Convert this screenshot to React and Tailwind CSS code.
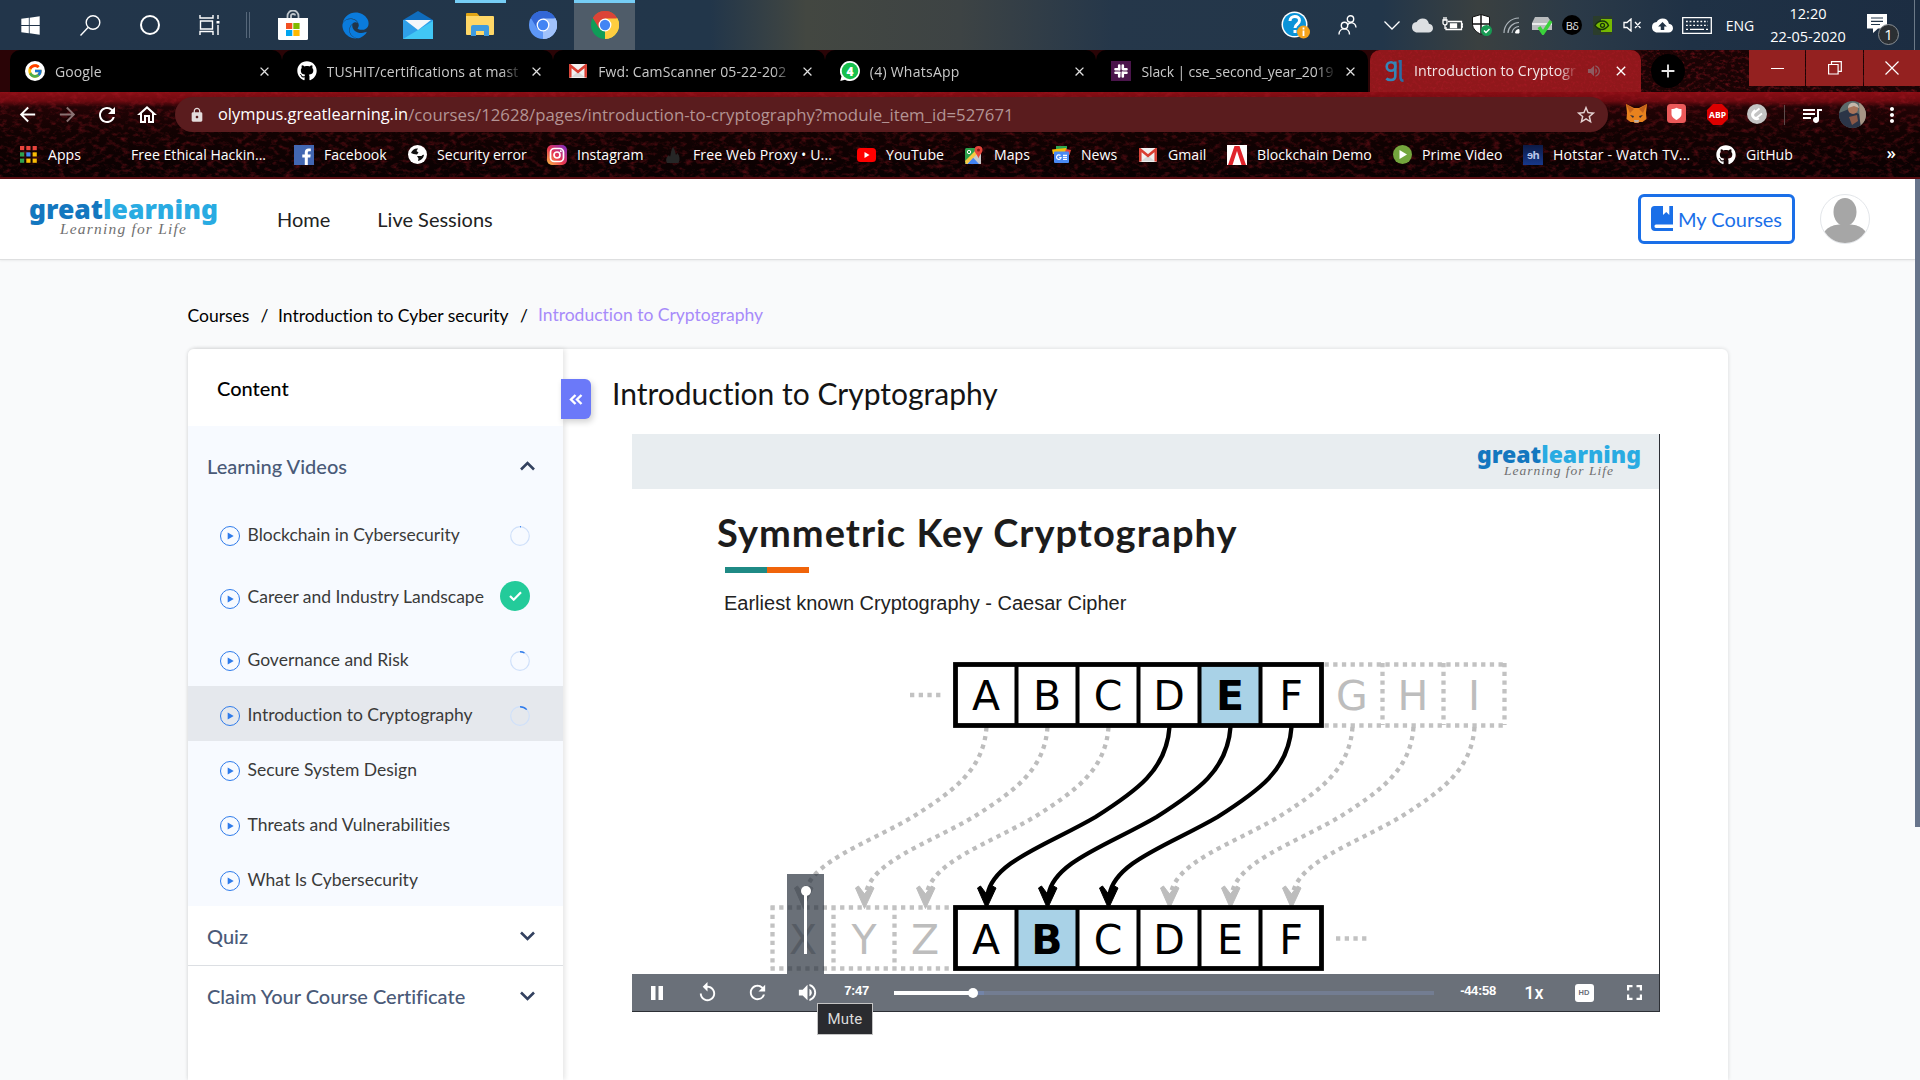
import React from "react";
import { FaGithub, FaWindows, FaEdge } from "react-icons/fa";
import { FcGoogle } from "react-icons/fc";
import {
  MdArrowBack,
  MdArrowForward,
  MdRefresh,
  MdOutlineHome,
  MdLock,
  MdStarBorder,
  MdQueueMusic,
  MdMoreVert,
  MdReplay,
  MdVolumeUp,
  MdClose,
  MdAdd,
  MdBackup,
  MdCloud,
} from "react-icons/md";

/* ---------- small drawings ---------- */

const ChromeMark = ({ a, b, c, d = "#4285f4", w = 28 }) => (
  <svg width={w} height={w} viewBox="0 0 48 48">
    <circle cx="24" cy="24" r="24" fill={b} />
    <path d="M24 24 L3.2 12 A24 24 0 0 1 44.8 12 Z" fill={a} />
    <path d="M24 24 L44.8 12 A24 24 0 0 1 24 48 Z" fill={c} />
    <path d="M24 13 H45.3 A24 24 0 0 0 3.2 12 L14 30 Z" fill={a} />
    <path d="M33.5 29.5 L24 48 A24 24 0 0 0 45.3 13 H24 Z" fill={c} />
    <circle cx="24" cy="24" r="11" fill="#fff" />
    <circle cx="24" cy="24" r="8.8" fill={d} />
  </svg>
);

const GmailIcon = () => (
  <svg width="18" height="14" viewBox="0 0 18 14">
    <rect width="18" height="14" rx="1.5" fill="#f1f1f1" />
    <path d="M2.5 13 L9 7.5 15.5 13" fill="#d9d9d9" />
    <path d="M1.3 13.5 V1.5 L9 7.8 16.7 1.5 V13.5" fill="none" stroke="#d93f33" strokeWidth="2.5" />
  </svg>
);

const icons = {
  google: (
    <span className="flex size-5 items-center justify-center rounded-full bg-white">
      <FcGoogle size={16} />
    </span>
  ),
  github: <FaGithub size={20} color="#fff" />,
  gmail: <GmailIcon />,
  whatsapp: (
    <svg width="20" height="20" viewBox="0 0 20 20">
      <path d="M10 0 A10 10 0 1 1 5 18.700 L0.300 20 1.500 15.300 A10 10 0 0 1 10 0Z" fill="#fff" />
      <circle cx="10" cy="10" r="8.300" fill="#17c04d" />
      <text x="10" y="14.500" textAnchor="middle" fontFamily="Open Sans, sans-serif" fontWeight="800" fontSize="12" fill="#fff">4</text>
    </svg>
  ),
  slack: (
    <svg width="20" height="20" viewBox="0 0 20 20">
      <rect width="20" height="20" fill="#4a154b" />
      <g stroke="#fff" strokeWidth="2.600" strokeLinecap="round">
        <path d="M8.200 4.500v4M8.200 12v3.500M11.800 4.500V8M11.800 11.500v4M4.500 8.300H8M12 8.300h3.500M4.500 11.800h4M12 11.800h3.500" />
      </g>
    </svg>
  ),
  gl: (
    <svg width="20" height="22" viewBox="0 0 20 22" fill="none" stroke="#3486b8" strokeWidth="2.600">
      <circle cx="6" cy="6.500" r="4.300" />
      <path d="M10.300 1.500V16c0 3-2 4-4.500 4-2 0-3.500-.5-4.500-1.500" />
      <path d="M13.500 1.200h2v16c0 2.500 1 3.500 3 3.500" stroke="#2b6ea6" />
    </svg>
  ),
  apps: (
    <svg width="17" height="17" viewBox="0 0 17 17">
      {["#e8453c", "#e8453c", "#e8453c", "#2fa24f", "#4286f5", "#fbbc05", "#2fa24f", "#fbbc05", "#fbbc05"].map((c, i) => (
        <rect key={i} x={(i % 3) * 6.3} y={Math.floor(i / 3) * 6.3} width="4.200" height="4.200" fill={c} />
      ))}
    </svg>
  ),
  blank: null,
  facebook: (
    <svg width="20" height="20" viewBox="0 0 20 20">
      <rect width="20" height="20" fill="#4267b2" />
      <path d="M13.800 20v-7.500h2.500l.4-3h-2.900V7.700c0-.9.300-1.500 1.500-1.500h1.500V3.600c-.3 0-1.200-.1-2.200-.1-2.300 0-3.800 1.300-3.800 3.800v2.200H8.300v3h2.500V20z" fill="#fff" />
    </svg>
  ),
  security: (
    <svg width="19" height="19" viewBox="0 0 19 19">
      <circle cx="9.500" cy="9.500" r="9.500" fill="#fff" />
      <path d="M3 8c1-3 4-5 7-4.500L8.500 6l2 1.500L9 9.500 5.500 9zM9 11h4.500c1-1 2-1.500 2.500-1-.5 3-3 5.500-6 6l.5-2.500z" fill="#111" />
    </svg>
  ),
  instagram: (
    <svg width="20" height="20" viewBox="0 0 20 20">
      <defs>
        <linearGradient id="ig" x1="0" y1="1" x2="1" y2="0">
          <stop offset="0" stopColor="#fcc34a" />
          <stop offset=".45" stopColor="#e8364f" />
          <stop offset="1" stopColor="#7b2ccb" />
        </linearGradient>
      </defs>
      <rect width="20" height="20" rx="5" fill="url(#ig)" />
      <rect x="3.500" y="3.500" width="13" height="13" rx="3.800" fill="none" stroke="#fff" strokeWidth="1.700" />
      <circle cx="10" cy="10" r="3" fill="none" stroke="#fff" strokeWidth="1.700" />
      <circle cx="13.800" cy="6.200" r="1" fill="#fff" />
    </svg>
  ),
  proxy: (
    <svg width="18" height="18" viewBox="0 0 18 18">
      <path d="M3 17c-2-4 0-6 2-8l1 2C7 7 7 4 9 1c2 3 2 5 3 8l1.500-2c2 3 3 6 1 10z" fill="#262626" />
    </svg>
  ),
  youtube: (
    <svg width="19" height="14" viewBox="0 0 19 14">
      <rect width="19" height="14" rx="3.500" fill="#f00" />
      <path d="M7.500 4v6l5-3z" fill="#fff" />
    </svg>
  ),
  maps: (
    <svg width="18" height="18" viewBox="0 0 18 18">
      <rect y="2" width="16" height="16" rx="1.500" fill="#2ba14b" />
      <path d="M0 18 16 2V18z" fill="#c9c9c9" />
      <path d="M2.500 18 8 11.500 14 18z" fill="#4285f4" />
      <path d="M0 15 13 2h3v2L2 18H1z" fill="#f7c844" />
      <path d="M13.500 0a4 4 0 0 1 4 4c0 3-3 4.500-4 8.500-1-4-4-5.500-4-8.500a4 4 0 0 1 4-4z" fill="#e5453a" />
      <circle cx="13.500" cy="4" r="1.500" fill="#8c1a14" />
      <circle cx="4" cy="6" r="1.700" fill="none" stroke="#fff" />
    </svg>
  ),
  news: (
    <svg width="19" height="17" viewBox="0 0 19 17">
      <path d="M4 0h11v6H4z" fill="#2fa853" />
      <path d="M0 3.500 14 2l1 6H1z" fill="#fbbc05" />
      <path d="M14 3l5 1-1.500 5H12z" fill="#e8453c" />
      <rect x="2" y="5.500" width="15" height="11.500" rx="1" fill="#4a8af4" />
      <path d="M8.500 9.500a2.300 2.300 0 1 0 .6 2H7.200M11 9.300h4M11 11.300h4M11 13.300h4" fill="none" stroke="#fff" strokeWidth="1.200" />
    </svg>
  ),
  blockchain: (
    <svg width="20" height="20" viewBox="0 0 20 20">
      <rect width="20" height="20" fill="#fff" />
      <path d="M1 20 7.500 1h5L19 20h-4.500L10 6 5.500 20z" fill="#e0242b" />
    </svg>
  ),
  prime: (
    <svg width="19" height="19" viewBox="0 0 19 19">
      <circle cx="9.500" cy="9.500" r="9.500" fill="#74a63d" />
      <path d="M6.500 5v9l7.500-4.500z" fill="#fff" />
    </svg>
  ),
  hotstar: (
    <span className="flex h-5 w-5 items-center justify-center bg-[linear-gradient(180deg,#0c1a45,#17388a)] text-[11px] font-bold tracking-tighter text-[#b9c6ea]">ɘh</span>
  ),
};

/* ---------- Windows taskbar ---------- */

const StoreIcon = () => (
  <svg width="30" height="30" viewBox="0 0 30 30">
    <path d="M9.500 10V6a5.500 5.500 0 0 1 11 0v4M13 8V5.500c0-2 4-2 4 0" fill="none" stroke="#bfc6cc" strokeWidth="1.800" />
    <path d="M0 8h30v20.500a1.500 1.500 0 0 1-1.500 1.500h-27A1.500 1.500 0 0 1 0 28.500z" fill="#fff" />
    <path d="M8 13h6.300v6H8z" fill="#f25022" />
    <path d="M15.300 13h6.300v6h-6.300z" fill="#7fba00" />
    <path d="M8 20h6.300v6H8z" fill="#00a4ef" />
    <path d="M15.300 20h6.300v6h-6.300z" fill="#ffb900" />
  </svg>
);
const MailIcon = () => (
  <svg width="30" height="28" viewBox="0 0 30 28">
    <path d="M0 9 15 0l15 9v3H0z" fill="#0f6cbd" />
    <path d="M0 9h30v19H0z" fill="#2f9fe8" />
    <path d="M0 28 30 10V28z" fill="#41c7f5" />
    <path d="M2 9h26L15 19z" fill="#f4f7fa" />
  </svg>
);
const ExplorerIcon = () => (
  <svg width="28" height="24" viewBox="0 0 28 24">
    <path d="M0 1a1 1 0 0 1 1-1h10l2.500 3H0z" fill="#e0a415" />
    <path d="M0 3h27a1 1 0 0 1 1 1v17a1 1 0 0 1-1 1H1a1 1 0 0 1-1-1z" fill="#ffd767" />
    <path d="M5 23v-9a2 2 0 0 1 2-2h14a2 2 0 0 1 2 2v9h-5v-5h-8v5z" fill="#3e9be0" />
  </svg>
);
const stroke = { fill: "none", stroke: "#fff" };

const trayIcons = [
  <MdCloud size={21} color="#dcdfe2" />,
  <svg width="21" height="16" viewBox="0 0 21 16" {...stroke} strokeWidth="1.300">
    <path d="M6 4.500h13.500v8H4V10M19.500 7H21v3h-1.500" />
    <path d="M8.500 7h6v3.500h-6z" fill="#fff" />
    <path d="M1 3h4v3a2 2 0 0 1-4 0zM2 3V0M4 3V0M3 8v4" />
  </svg>,
  <svg width="20" height="22" viewBox="0 0 20 22">
    <path d="M9 .5 17.500 3v7c0 5-4 8-8.500 10.500C4.500 18 .5 15 .5 10V3z" fill="#fff" stroke="#111" />
    <path d="M9 1v19M1 10h16" stroke="#111" strokeWidth="1.500" />
    <circle cx="14.500" cy="16.500" r="5.500" fill="#189b53" />
    <path d="M12 16.500l2 2 3.500-3.500" {...stroke} strokeWidth="1.400" />
  </svg>,
  <svg width="18" height="17" viewBox="0 0 18 17" {...stroke}>
    <path d="M1 16A15 15 0 0 1 16 1M5 16A11 11 0 0 1 16 5.500M9 16a7 7 0 0 1 7-6.500" stroke="#aeb6bc" strokeWidth="1.200" />
    <path d="M12.500 16a3.500 3.500 0 0 1 3.500-3.500V16z" fill="#fff" />
  </svg>,
  <svg width="21" height="19" viewBox="0 0 21 19">
    <path d="M3 1h13l4 6v7H0V7z" fill="#b9bcbe" />
    <path d="M0 7h20v2H0z" fill="#e9eaeb" />
    <path d="M7 11l4 6L19 5" fill="none" stroke="#3bd23b" strokeWidth="3.500" />
  </svg>,
  <span className="flex size-5 items-center justify-center rounded-full bg-black text-[11px] leading-none tracking-tighter text-[#e6e6e6]">Bδ</span>,
  <svg width="19" height="19" viewBox="0 0 19 19">
    <rect width="19" height="19" rx="1" fill="#2b3d2b" />
    <path d="M8 3h11v13H8z" fill="#76b900" />
    <path d="M2 9.500C4 6 7 5 9.500 5s5 2 6 4.500c-2 2.500-4 4-6.500 4S4 12 2 9.500z" fill="#76b900" stroke="#16320a" strokeWidth="1.400" />
    <circle cx="9.500" cy="9.300" r="2" fill="none" stroke="#16320a" strokeWidth="1.300" />
  </svg>,
  <svg width="19" height="14" viewBox="0 0 19 14" {...stroke} strokeWidth="1.300">
    <path d="M1 4.500h3L8 1v12L4 9.500H1zM12 4l5.500 6M17.500 4 12 10" />
  </svg>,
  <MdBackup size={21} color="#fff" />,
];

function Taskbar() {
  return (
    <div className="flex h-[50px] shrink-0 bg-[linear-gradient(90deg,#22354a_0%,#22364a_37%,#434741_42%,#3d4344_50%,#25374a_58%,#22364a_72%,#3a4040_77%,#2b3a48_82%,#1f3145_88%,#1c2d42_100%)] text-white">
      <div className="flex h-full w-60 items-center">
        <div className="flex w-15 justify-center"><FaWindows size={21} /></div>
        <div className="flex w-15 justify-center">
          <svg width="21" height="21" viewBox="0 0 21 21" {...stroke} strokeWidth="1.400"><circle cx="13" cy="7.500" r="6.800" /><path d="M8 12.500.5 20.500" /></svg>
        </div>
        <div className="flex w-15 justify-center">
          <span className="size-5 rounded-full border-[2.5px] border-white" />
        </div>
        <div className="flex w-15 justify-center">
          <svg width="22" height="20" viewBox="0 0 22 20" {...stroke} strokeWidth="1.400">
            <path d="M1 0v3h13V0M1 20v-3.500h13V20M1.500 6h12v8h-12zM19 0v4M19 10v10" /><path d="M17.500 6h3v2.500h-3z" fill="#fff" stroke="none" />
          </svg>
        </div>
      </div>
      <div className="mt-3 ml-1.5 h-[26px] w-1 border-x border-[#56677a]" />
      <div className="ml-3 flex h-full">
        <div className="flex w-[62px] items-center justify-center"><StoreIcon /></div>
        <div className="flex w-[63px] items-center justify-center"><FaEdge size={27} color="#0a7bdc" /></div>
        <div className="flex w-[62px] items-center justify-center"><MailIcon /></div>
        <div className="flex w-[62px] flex-col items-center">
          <div className="h-[3px] w-[51px] bg-[#76cdf5]" />
          <div className="flex flex-1 items-center pb-[3px]"><ExplorerIcon /></div>
        </div>
        <div className="flex w-[63px] items-center justify-center">
          <ChromeMark a="#3367d6" b="#5e97f6" c="#a1c2fa" />
        </div>
        <div className="flex w-[61px] items-center justify-center border-t-[3px] border-[#76cdf5] bg-[#4f5c69] pb-[3px]">
          <ChromeMark a="#db4437" b="#0f9d58" c="#ffcd40" />
        </div>
      </div>
      <div className="ml-auto flex h-full items-center pr-[5px]">
        <div className="flex w-[43px] justify-center">
          <svg width="29" height="28" viewBox="0 0 29 28">
            <circle cx="13.500" cy="13.500" r="13" fill="#fff" /><circle cx="13.500" cy="13.500" r="11.500" fill="#0a93d8" />
            <path d="M9 10c0-6 9.500-6 9.500-.5 0 4-4.500 3.500-4.500 7.500M14 19v3" {...stroke} strokeWidth="3" />
            <circle cx="22.500" cy="21" r="6.500" fill="#f5a31c" /><path d="M22.500 19.500v5.500M22.500 16.500v2" {...stroke} strokeWidth="1.800" />
          </svg>
        </div>
        <div className="flex w-15 justify-center">
          <svg width="19" height="20" viewBox="0 0 19 20" {...stroke} strokeWidth="1.400">
            <circle cx="12.500" cy="4" r="3.200" /><path d="M9.500 10c2-3.500 8-3 8.500 2.500" /><circle cx="6.500" cy="10.500" r="3.200" /><path d="M1 19.500c0-7.500 10.500-7.500 10.500 0" />
          </svg>
        </div>
        <div className="flex w-[30px] justify-center">
          <svg width="16" height="9" viewBox="0 0 16 9" {...stroke} strokeWidth="1.300"><path d="M.5.5 8 8 15.500.5" /></svg>
        </div>
        {trayIcons.map((ic, i) => (
          <div key={i} className="flex w-[30px] justify-center">{ic}</div>
        ))}
        <div className="flex w-10 justify-center">
          <svg width="30" height="17" viewBox="0 0 30 17" {...stroke} strokeWidth="1.300">
            <path d="M.7.700h28.600v15.600H.7z" /><path d="M4 4.500h22M4 8.300h22" strokeDasharray="1.800 1.800" /><path d="M4 12.300h2M8 12.300h14M24 12.300h2" />
          </svg>
        </div>
        <div className="w-[46px] text-center text-[14px]">ENG</div>
        <div className="flex h-full w-[90px] flex-col items-center pt-[3px] text-[14.5px] leading-[22.5px]">
          <span>12:20</span>
          <span>22-05-2020</span>
        </div>
        <div className="relative flex w-[52px] justify-center">
          <svg className="-mt-0.5 mr-1" width="21" height="20" viewBox="0 0 21 20"><path d="M0 0h20v14.500h-9L6 19v-4.500H0z" fill="#fff" /><path d="M4 4h12M4 7.300h12M4 10.500h9" stroke="#22364a" strokeWidth="1.200" /></svg>
          <span className="absolute top-2 left-[25px] flex size-[21px] items-center justify-center rounded-full border border-[#8a8f94] bg-[#2b2f33] text-[15px]">1</span>
        </div>
        <div className="ml-[9px] h-full w-px bg-[#6c7a88]" />
      </div>
    </div>
  );
}

/* ---------- Browser chrome ---------- */

const tabs = [
  { icon: icons.google, title: "Google", tracking: "tracking-[0.1px]" },
  { icon: icons.github, title: "TUSHIT/certifications at mast", tracking: "tracking-[0.1px]" },
  { icon: icons.gmail, title: "Fwd: CamScanner 05-22-202", tracking: "tracking-[0.12px]" },
  { icon: icons.whatsapp, title: "(4) WhatsApp", tracking: "tracking-[0.25px]" },
  { icon: icons.slack, title: "Slack | cse_second_year_2019", tracking: "tracking-[-0.1px]" },
];

const bookmarks = [
  [icons.apps, "Apps", "w-[83px]", "tracking-normal"],
  [icons.blank, "Free Ethical Hackin...", "w-[193px]", "tracking-normal"],
  [icons.facebook, "Facebook", "w-[113px]", "tracking-normal"],
  [icons.security, "Security error", "w-[140px]", "tracking-normal"],
  [icons.instagram, "Instagram", "w-[116px]", "tracking-normal"],
  [icons.proxy, "Free Web Proxy • U...", "w-[193px]", "tracking-[0.1px]"],
  [icons.youtube, "YouTube", "w-[108px]", "tracking-normal"],
  [icons.maps, "Maps", "w-[87px]", "tracking-normal"],
  [icons.news, "News", "w-[87px]", "tracking-normal"],
  [icons.gmail, "Gmail", "w-[89px]", "tracking-normal"],
  [icons.blockchain, "Blockchain Demo", "w-[165px]", "tracking-[0.05px]"],
  [icons.prime, "Prime Video", "w-[131px]", "tracking-[0.12px]"],
  [icons.hotstar, "Hotstar - Watch TV...", "w-[193px]", "tracking-[0.2px]"],
  [icons.github, "GitHub", "w-[90px]", "tracking-[0.1px]"],
];

const Grain = ({ id, strength, freq }) => (
  <svg className="pointer-events-none absolute inset-0 -z-10 h-full w-full" aria-hidden="true">
    <filter id={id} x="0" y="0" width="100%" height="100%">
      <feTurbulence type="fractalNoise" baseFrequency={freq} numOctaves="4" seed="7" />
      <feColorMatrix values={`0 0 0 0 .42  0 0 0 0 .01  0 0 0 0 .02  ${strength} 0 0 0 -${strength * 0.48}`} />
    </filter>
    <rect width="100%" height="100%" filter={`url(#${id})`} />
  </svg>
);

function TabStrip() {
  return (
    <div className="flex h-[42px] shrink-0 bg-[#2a0406]">
      <div className="flex w-[1370px] shrink-0 pl-[10px]">
        {tabs.map((t, i) => (
          <div key={i} className="flex h-full w-[271.6px] shrink-0 items-center rounded-t-[10px] bg-black pl-[15px] text-[#c9c9c9]">
            <span className="flex w-5 shrink-0 justify-center">{t.icon}</span>
            <span className={`ml-2.5 w-[196px] shrink-0 overflow-hidden whitespace-nowrap text-[14px] [mask-image:linear-gradient(90deg,#000_89%,transparent_100%)] ${t.tracking}`}>{t.title}</span>
            <MdClose size={15} className="ml-1.5 shrink-0" color="#e0e0e0" />
            {i < 4 && <span className="ml-[11px] h-[25px] w-px bg-[#4d4d4d]" />}
          </div>
        ))}
      </div>
      <div className="relative isolate flex h-full w-[271px] shrink-0 items-center overflow-hidden rounded-t-[10px] bg-[#90171b] pl-[15px] text-[#f2e6e6]">
        <Grain id="g1" strength={1.4} freq="0.35" />
        {icons.gl}
        <span className="ml-[9px] w-[164px] overflow-hidden whitespace-nowrap text-[14.2px] tracking-[0.05px] [mask-image:linear-gradient(90deg,#000_88%,transparent_100%)]">Introduction to Cryptogr</span>
        <MdVolumeUp size={16} className="ml-2" color="#8d5a60" />
        <MdClose size={16} className="ml-[11px]" color="#fff" />
      </div>
      <div className="relative isolate flex flex-1 bg-[#190304]">
        <Grain id="g2" strength={1.3} freq="0.2 0.3" />
        <span className="mt-1 ml-2.5 flex size-[34px] items-center justify-center rounded-full bg-black">
          <MdAdd size={22} color="#e8e8e8" />
        </span>
        <div className="ml-auto flex h-9 gap-px">
          <div className="flex w-14 items-center justify-center bg-[#942120]"><span className="h-px w-[13px] bg-white" /></div>
          <div className="flex w-[57px] items-center justify-center bg-[#942120]">
            <svg width="14" height="14" viewBox="0 0 14 14" {...stroke} strokeWidth="1.200"><path d="M.6 3.500h9.500V13H.6zM3.500 3.500V.6h9.800v9.800h-3" /></svg>
          </div>
          <div className="flex w-14 items-center justify-center bg-[#942120]">
            <svg width="14" height="14" viewBox="0 0 14 14" {...stroke} strokeWidth="1.200"><path d="M.5.5l13 13M13.500.5l-13 13" /></svg>
          </div>
        </div>
      </div>
    </div>
  );
}

function Toolbar() {
  return (
    <div className="relative isolate flex h-[87px] shrink-0 flex-col border-b-2 border-[#560c10] bg-[linear-gradient(180deg,#8a0d14_0px,#6d0a10_9px,#220305_15px,#120202_40px,#0a0102_100%)]">
      <Grain id="g3" strength={1.05} freq="0.14 0.22" />
      <div className="flex h-[45px] items-center pl-[7px]">
        <div className="flex w-10 justify-center"><MdArrowBack size={23} color="#fff" /></div>
        <div className="flex w-10 justify-center"><MdArrowForward size={23} color="#8a7373" /></div>
        <div className="flex w-10 justify-center"><MdRefresh size={24} color="#fff" /></div>
        <div className="flex w-10 justify-center"><MdOutlineHome size={24} color="#fff" /></div>
        <div className="ml-2 flex h-[35px] w-[1433px] items-center rounded-full bg-[#5a1c1e] pr-[11px] pl-[14px]">
          <MdLock size={16} color="#e4dcdc" />
          <span className="ml-[13px] text-[16.4px] text-white">olympus.greatlearning.in</span>
          <span className="text-[16.8px] text-[#b39494]">/courses/12628/pages/introduction-to-cryptography?module_item_id=527671</span>
          <MdStarBorder size={22} className="ml-auto" color="#e4d2d2" />
        </div>
        <div className="ml-2 flex">
          <div className="flex w-10 justify-center">
            <svg width="21" height="19" viewBox="0 0 21 19">
              <path d="M0 0l8 4h5l8-4-1 9 .5 6-4 3h-3l-2 1.500h-2L7.500 18h-3l-4-3L1 9z" fill="#e8821e" />
              <path d="M0 0l8 5-4 4zM21 0l-8 5 4 4z" fill="#c4611a" /><path d="M4 11l4 1-1 2zM17 11l-4 1 1 2z" fill="#2b2b3a" /><path d="M8 16h5l-.5 2.500h-4z" fill="#c0ad9e" />
            </svg>
          </div>
          <div className="flex w-[41px] justify-center">
            <svg width="19" height="19" viewBox="0 0 19 19"><rect width="19" height="19" rx="3.500" fill="#ec5a5a" /><path d="M4.500 5c2 0 3.500-.5 5-1.300C11 4.500 12.500 5 14.500 5v5c0 3-2.500 4.500-5 6-2.500-1.500-5-3-5-6z" fill="#fff" /></svg>
          </div>
          <div className="flex w-10 justify-center">
            <svg width="21" height="21" viewBox="0 0 21 21"><path d="M6 0h9l6 6v9l-6 6H6l-6-6V6z" fill="#d00" /><text x="10.500" y="14" textAnchor="middle" fontSize="9.500" fontWeight="700" textLength="17" lengthAdjust="spacingAndGlyphs" fontFamily="Open Sans, sans-serif" fill="#fff">ABP</text></svg>
          </div>
          <div className="flex w-10 justify-center">
            <svg width="20" height="20" viewBox="0 0 20 20"><circle cx="10" cy="10" r="10" fill="#c4c4c4" /><path d="M12.500 4.500 7 9c-2 2 0 5.500 3 4.500l5-4M8 6l-2 2a4.500 4.500 0 0 0 6 6.500" fill="none" stroke="#fff" strokeWidth="1.800" /></svg>
          </div>
        </div>
        <span className="ml-[7px] h-5 w-px bg-[#5d4b4b]" />
        <div className="ml-[7px] flex w-10 justify-center"><MdQueueMusic size={24} color="#fff" /></div>
        <div className="flex w-10 justify-center">
          <svg width="27" height="27" viewBox="0 0 27 27">
            <clipPath id="av"><circle cx="13.500" cy="13.500" r="13.500" /></clipPath>
            <g clipPath="url(#av)">
              <rect width="27" height="27" fill="#5c6a6a" /><path d="M20 0h7v27h-6z" fill="#a79585" /><path d="M0 12l10-4 10 5 2 14H0z" fill="#2b3547" />
              <circle cx="14" cy="8" r="5" fill="#a9755a" /><path d="M9 7c0-7 10-7 11 0l-5-2z" fill="#c4b8ab" /><path d="M10 16l8-2 1 6-6 4z" fill="#8a5846" />
            </g>
          </svg>
        </div>
        <div className="flex w-10 justify-center"><MdMoreVert size={24} color="#fff" /></div>
      </div>
      <div className="flex h-9 items-center pl-[18px] text-[14.1px] text-white">
        {bookmarks.map(([icon, label, width, tracking]) => (
          <div key={label} className={`flex shrink-0 items-center whitespace-nowrap ${width} ${tracking}`}>
            <span className="mr-2.5 flex w-5 shrink-0 justify-center">{icon}</span>
            {label}
          </div>
        ))}
        <span className="ml-auto pr-6 pb-1 text-[17px] font-semibold">»</span>
      </div>
    </div>
  );
}

/* ---------- Page ---------- */

const BrandLogo = ({ slide = false }) => (
  <div className={slide ? "flex w-[164px] flex-col items-center" : "flex w-[189px] flex-col items-center"}>
    <span className={`font-["Noto_Sans",sans-serif] font-black text-[#1377bf] ${slide ? "text-[23px] leading-[25px]" : "text-[26.5px] leading-[29px]"}`}>
      great<span className="text-[#29abe2]">learning</span>
    </span>
    <span className={`font-["Liberation_Serif",serif] italic text-[#707070] ${slide ? "-mt-[3px] text-[13.5px] leading-[14px] tracking-[1px]" : "-mt-[3px] text-[15.5px] leading-4 tracking-[1.2px]"}`}>
      Learning for Life
    </span>
  </div>
);

const PlayCircle = () => (
  <svg width="20" height="20" viewBox="0 0 20 20" className="shrink-0">
    <circle cx="10" cy="10" r="9.500" fill="none" stroke="#2f7bea" />
    <path d="M7.700 6.500v7l6-3.500z" fill="#2f7bea" />
  </svg>
);

const Ring = ({ done }) => (
  <svg width="20" height="20" viewBox="0 0 20 20">
    <circle cx="10" cy="10" r="9.300" fill="none" stroke="#cfe0fa" strokeWidth="1.200" />
    <circle cx="10" cy="10" r="9.300" fill="none" stroke="#2f7bea" strokeWidth="1.400" pathLength="100" strokeDasharray={`${done} 100`} transform="rotate(-90 10 10)" />
  </svg>
);

const Chevron = ({ up }) => (
  <svg width="15" height="10" viewBox="0 0 15 10" fill="none" stroke="#33415f" strokeWidth="2.600">
    {up ? <path d="M1 8.500 7.500 2 14 8.500" /> : <path d="M1 1.500 7.500 8 14 1.500" />}
  </svg>
);

const lessons = [
  { title: "Blockchain in Cybersecurity", done: 1.5 },
  { title: "Career and Industry Landscape", complete: true },
  { title: "Governance and Risk", done: 8 },
  { title: "Introduction to Cryptography", done: 13, active: true },
  { title: "Secure System Design" },
  { title: "Threats and Vulnerabilities" },
  { title: "What Is Cybersecurity" },
];

function Sidebar() {
  return (
    <aside className="relative z-10 w-[375px] shrink-0 rounded-tl-md bg-white shadow-[2px_0_5px_rgba(0,0,0,0.1)]">
      <div className="flex h-[77px] items-center pl-[29px] text-[20px] font-medium text-black">Content</div>
      <div className="bg-[#f7faff]">
        <div className="flex h-20 items-center justify-between pr-7 pl-[19px] text-[20px] font-medium text-[#4a5a78]">
          <span>Learning Videos</span>
          <Chevron up />
        </div>
        {lessons.map((l) => (
          <div
            key={l.title}
            className={`flex items-center pr-[33px] pl-8 ${l.complete ? "h-[70px]" : "h-[55px]"} ${l.active ? "bg-[#e5e8ed]" : ""}`}
          >
            <span className="mt-[5px]"><PlayCircle /></span>
            <span className="mt-[3px] ml-[7.500px] whitespace-nowrap text-[17.5px] text-[#3a3a3a]">{l.title}</span>
            {l.done && <span className="mt-[5px] ml-auto"><Ring done={l.done} /></span>}
            {l.complete && (
              <span className="ml-auto flex size-[30px] items-center justify-center rounded-full bg-[#23cb9a]">
                <svg width="13" height="10" viewBox="0 0 13 10" fill="none" stroke="#fff" strokeWidth="2.200"><path d="M1 5l3.700 3.700L12 1.200" /></svg>
              </span>
            )}
          </div>
        ))}
      </div>
      <div className="divide-y divide-[#dcdfe3]">
        {["Quiz", "Claim Your Course Certificate"].map((s) => (
          <div key={s} className="flex h-[60px] items-center justify-between pr-7 pl-[19px] text-[20px] font-medium text-[#4a5a78]">
            <span>{s}</span>
            <Chevron />
          </div>
        ))}
      </div>
      <button className="absolute top-[30px] left-[373px] flex h-10 w-[30px] items-center justify-center rounded-r-md bg-[#6b79f9] shadow-[2px_3px_6px_rgba(0,0,0,0.18)]">
        <svg width="14" height="11" viewBox="0 0 14 11" fill="none" stroke="#fff" strokeWidth="2.400"><path d="M6.500 1 2 5.500l4.500 4.500M12.500 1 8 5.500l4.500 4.500" /></svg>
      </button>
    </aside>
  );
}

/* Caesar cipher diagram: cells are 61 units wide, the lower row sits three cells to the left. */
const CELL = 61;
const X0 = 323.5;
const letters = "ABCDEFGHI".split("");
const lower = "XYZABCDEF".split("");

function CipherDiagram() {
  const colX = (i) => X0 + i * CELL;
  const cell = (ch, i, y, solid, key, hot) => (
    <text key={key} x={colX(i) + CELL / 2} y={y} textAnchor="middle" fontSize="41" fontWeight={hot ? 700 : 400} fill={solid ? "#000" : "#bdbdbd"}>
      {ch}
    </text>
  );
  const dotted = { stroke: "#c2c2c2", strokeWidth: 4.3, strokeDasharray: "4.3 4.4", fill: "none" };
  return (
    <svg width="1027" height="485" viewBox="0 0 1027 485" fontFamily="DejaVu Sans, sans-serif" className="block">
      <path d="M278 206h32M704 449.500h32" {...dotted} />
      <path d={`M${colX(6) + 3} 175.500H${colX(9) + 2}M${colX(6) + 3} 236.500H${colX(9) + 2}M${colX(7)} 174V236M${colX(8)} 174V236M${colX(9)} 174V236`} {...dotted} />
      <path d={`M${colX(-3) - 2} 418.500H${X0 - 3}M${colX(-3) - 2} 479.500H${X0 - 3}M${colX(-3)} 417V479M${colX(-2)} 417V479M${colX(-1)} 417V479`} {...dotted} />
      <rect x={colX(4)} y="175.500" width={CELL} height="61" fill="#a9d2e7" />
      <rect x={colX(1)} y="418.500" width={CELL} height="61" fill="#a9d2e7" />
      {[0, 1, 2, 6, 7, 8, 3, 4, 5].map((i) => {
        const solid = i > 2 && i < 6;
        const x = colX(i) + CELL / 2 + 0.5;
        const c = solid ? "#000" : "#bdbdbd";
        return (
          <g key={i}>
            <path
              d={`M${x} 238C${x - 3} 281 ${x - 33} 302 ${x - 74} 328C${x - 122} 356 ${x - 177} 373 ${x - 182} 406`}
              fill="none" stroke={c} strokeWidth="4.300" strokeDasharray={solid ? undefined : "4.3 4.6"}
            />
            <path d={`M${x - 192} 399l3-2 6 8 6-8 3.500 2-9.500 20.500z`} fill={c} stroke={c} strokeWidth="1" />
          </g>
        );
      })}
      <g fill="none" stroke="#000" strokeWidth="4.800">
        {[175.5, 418.5].map((y) => (
          <g key={y}>
            <rect x={X0} y={y} width={CELL * 6} height="61" />
            {[1, 2, 3, 4, 5].map((i) => <path key={i} d={`M${colX(i)} ${y}v61`} strokeWidth="4" />)}
          </g>
        ))}
      </g>
      {letters.map((ch, i) => cell(ch, i, 221, i < 6, `t${i}`, i === 4))}
      {lower.map((ch, i) => cell(ch, i - 3, 464.5, i > 2, `b${i}`, i === 4))}
    </svg>
  );
}

function VideoPlayer() {
  return (
    <div className="relative h-[578px] w-[1028px] border-r border-b border-[#2c2f35] bg-white">
      <div className="flex h-[55px] justify-end bg-[#e8edf0] pt-2 pr-[18px]">
        <BrandLogo slide />
      </div>
      <h2 className="mt-[21px] ml-[85px] text-[38px] leading-[44px] font-bold tracking-[1.02px] whitespace-nowrap text-[#1c1c1c]">
        Symmetric Key Cryptography
      </h2>
      <div className="mt-[13px] ml-[93px] flex h-1.5">
        <span className="w-[42px] bg-[#1f8a85]" />
        <span className="w-[42px] bg-[#f0640a]" />
      </div>
      <p className="mt-[18px] ml-[92px] font-['Liberation_Sans',sans-serif] text-[20px] leading-6 text-[#222]">
        Earliest known Cryptography - Caesar Cipher
      </p>
      <div className="absolute top-[55px] left-0">
        <CipherDiagram />
      </div>
      <div className="absolute bottom-[37px] left-[155px] flex h-[100px] w-[37px] flex-col items-center bg-[rgba(43,51,63,0.7)] pt-3">
        <span className="size-[10px] rounded-full bg-white" />
        <span className="-mt-1 h-[62px] w-[3px] bg-white" />
      </div>
      <div className="absolute bottom-0 left-0 flex h-[37px] w-full items-center bg-[#6a7079] text-white">
        <div className="flex w-[50px] justify-center"><svg width="12" height="14" viewBox="0 0 12 14" fill="#fff"><path d="M0 0h4.500v14H0zM7.500 0H12v14H7.500z" /></svg></div>
        <div className="flex w-[50px] justify-center"><MdReplay size={23} /></div>
        <div className="flex w-[50px] justify-center"><MdRefresh size={23} /></div>
        <div className="flex w-[50px] justify-center"><MdVolumeUp size={23} /></div>
        <div className="w-[49px] pb-1 text-center font-['Liberation_Sans',sans-serif] text-[13px] font-bold tracking-tight">7:47</div>
        <div className="mx-[13px] flex h-1 flex-1 items-center bg-[#737d92]">
          <span className="h-1 w-[76px] bg-white" />
          <span className="-ml-0.5 size-[10px] shrink-0 rounded-full bg-white" />
          <span className="h-1 w-1.5 bg-[#7384a8]" />
        </div>
        <div className="w-[62px] pb-1 text-center font-['Liberation_Sans',sans-serif] text-[13px] font-bold tracking-tight">-44:58</div>
        <div className="w-[50px] text-center font-['Roboto',sans-serif] text-[18px] font-medium">1x</div>
        <div className="flex w-[50px] justify-center">
          <span className="flex h-[18px] w-[19px] items-center justify-center rounded-[3px] bg-white font-['Liberation_Sans',sans-serif] text-[7.5px] font-bold tracking-wide text-[#6a7079]">HD</span>
        </div>
        <div className="flex w-[50px] justify-center"><svg width="15" height="15" viewBox="0 0 15 15" fill="none" stroke="#fff" strokeWidth="2.200"><path d="M1.100 5.500V1.100h4.400M9.500 1.100h4.400v4.400M13.900 9.500v4.400H9.500M5.500 13.900H1.100V9.500" /></svg></div>
      </div>
      <div className="absolute top-[569px] left-[185px] flex h-8 w-14 items-center justify-center border border-[#c4c4c4] bg-[#2a2b2f] font-['Roboto',sans-serif] text-[15px] tracking-[0.2px] text-[#dcdcdc]">
        Mute
      </div>
    </div>
  );
}

function Page() {
  return (
    <div className="flex h-[901px] [font-variant-ligatures:none] font-['Lato',sans-serif]">
      <div className="flex flex-1 flex-col bg-[#f9fafb]">
        <header className="flex h-[81px] shrink-0 items-center border-b border-[#dedfe0] bg-white pr-[45px] pl-[29px] text-[20px] text-[#222] shadow-[0_1px_2px_rgba(0,0,0,0.06)]">
          <div className="-mt-1.5"><BrandLogo /></div>
          <span className="ml-[59px]">Home</span>
          <span className="ml-[47px]">Live Sessions</span>
          <div className="ml-auto flex h-[50px] w-[157px] items-center rounded-md border-[3px] border-[#1a6fe8] pl-2.5 text-[#1a6fe8]">
            <svg width="22" height="25" viewBox="0 0 22 25" className="-mt-0.5">
              <path d="M3.500 0H12v9l3.200-3L18.300 9V0H22v18.500H5c-2 0-2 3.500 0 3.500h17v3H4c-2.500 0-4-1.500-4-4V3.500C0 1.300 1.300 0 3.500 0z" fill="#1a6fe8" />
            </svg>
            <span className="ml-[5px] whitespace-nowrap">My Courses</span>
          </div>
          <div className="ml-[25px] size-[50px] overflow-hidden rounded-full border border-[#e3e6ea]">
            <svg width="48" height="48" viewBox="0 0 48 48" fill="#a6a6a6">
              <ellipse cx="24" cy="17" rx="11.500" ry="14" />
              <path d="M0 50c0-16 10-20.500 20-20.500h8C38 29.500 48 34 48 50z" />
            </svg>
          </div>
        </header>
        <nav className="mt-[44px] ml-[187.500px] flex h-[22px] text-[17.5px] leading-[22px] whitespace-nowrap text-black">
          <span className="w-[73px] pt-px">Courses</span>
          <span className="w-[17.500px] pt-px">/</span>
          <span className="w-[242px] pt-px">Introduction to Cyber security</span>
          <span className="w-[18px] pt-px">/</span>
          <span className="text-[#a78bfa]">Introduction to Cryptography</span>
        </nav>
        <main className="mt-[23px] ml-[188px] flex w-[1540px] flex-1 rounded-t-md bg-white shadow-[0_0_4px_rgba(0,0,0,0.14)]">
          <Sidebar />
          <section className="flex-1 pl-[69px]">
            <h1 className="-ml-5 flex h-[85px] items-center pt-1 text-[30px] text-[#141414]">Introduction to Cryptography</h1>
            <VideoPlayer />
          </section>
        </main>
      </div>
      <div className="w-[5px] shrink-0 bg-[#f9fafb]">
        <div className="h-[648px] bg-[#67748b]" />
      </div>
    </div>
  );
}

export default function App() {
  return (
    <div className="flex h-[1080px] w-[1920px] flex-col overflow-hidden bg-black font-['Open_Sans',sans-serif]">
      <Taskbar />
      <TabStrip />
      <Toolbar />
      <Page />
    </div>
  );
}
